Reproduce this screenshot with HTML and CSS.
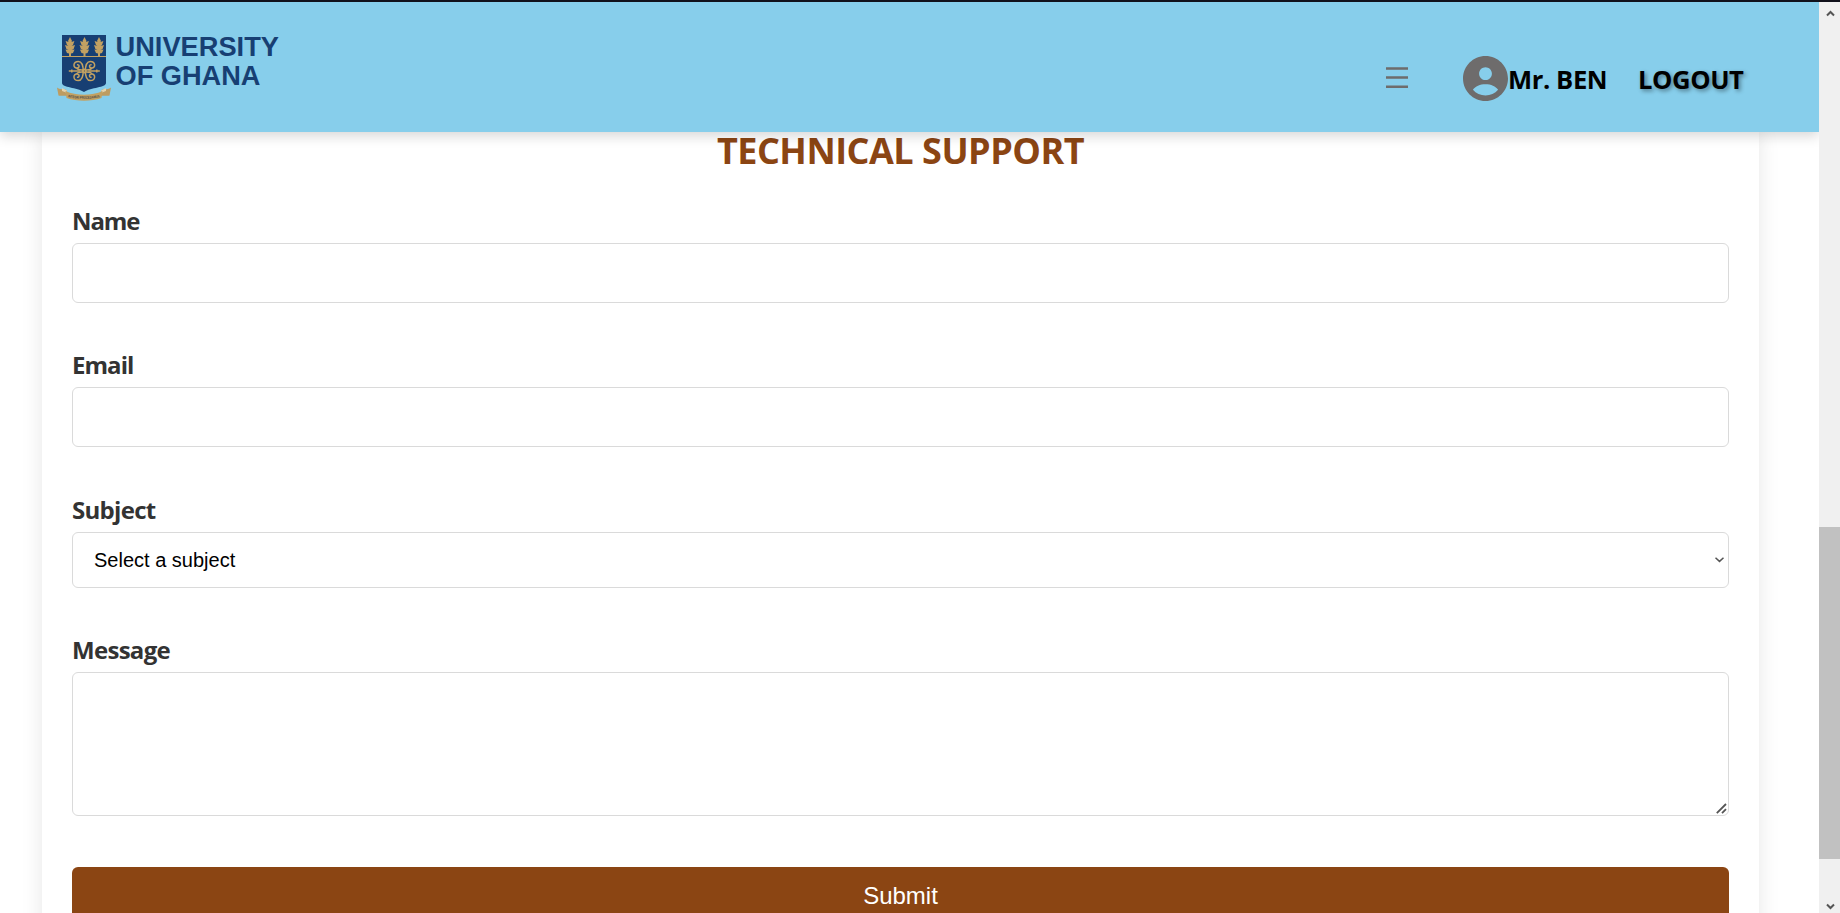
FILE: index.html
```html
<!DOCTYPE html>
<html lang="en">
<head>
<meta charset="utf-8">
<title>Technical Support</title>
<link rel="stylesheet" href="styles.css">
</head>
<body>
<div class="window">
  <div class="page">
    <header class="header">
      <svg class="logo" width="230" height="76" viewBox="0 0 230 76" role="img" aria-label="University of Ghana">
        <defs>
          <g id="tree" fill="#c2a162">
            <path d="M0 0L2 4L1.400 5L4.400 4L3 8L1.600 9L5 8L3.600 12L1.600 13L4.600 12.400L3 16L1 16.600V20H-1V16.600L-3 16L-4.600 12.400L-1.600 13L-3.600 12L-5 8L-1.600 9L-3 8L-4.400 4L-1.400 5L-2 4Z"/>
          </g>
          <path id="curl" d="M1 1C1 -2 1 -9.500 6 -9.500C11.500 -9.500 11.500 -3 7.500 -3C4.500 -3 4.500 -6.800 7.300 -6.300M1 -1C4 -1 6 -.5 8 -3"/>
        </defs>
        <path d="M7 5H51V53C51 58 36 57 29 62C22 57 7 58 7 53Z" fill="#173f73"/>
        <use href="#tree" x="15" y="7"/><use href="#tree" x="29.500" y="7"/><use href="#tree" x="44" y="7"/>
        <path d="M7 26.500H51" stroke="#c2a162" stroke-width="1"/>
        <g transform="translate(29.300 41)" fill="none" stroke="#c2a162" stroke-width="1.500">
          <use href="#curl"/><use href="#curl" transform="scale(-1 1)"/>
          <use href="#curl" transform="scale(1 -1)"/><use href="#curl" transform="scale(-1 -1)"/>
          <path d="M-15.500 0H-4M4 0H15.500"/><path d="M-12.500 -1.500V1.500M12.500 -1.500V1.500"/><circle r="1.700"/>
        </g>
        <path d="M2 57.500C5 60 8 58.500 11.500 60L12 66C8 65 5 66.500 3.500 65.500Z" fill="#bd9c61"/>
        <path d="M56 57.500C53 60 50 58.500 46.500 60L46 66C50 65 53 66.500 54.500 65.500Z" fill="#bd9c61"/>
        <path d="M7 58L12 60.500L11 62.500L7 61Z M51 58L46 60.500L47 62.500L51 61Z" fill="#e3d3ae"/>
        <path d="M10.500 61C21 66 37 66 47.500 61L46.500 68C36 71.500 22 71.500 11.500 68Z" fill="#c2a162"/>
        <path id="motto" d="M13 67C22 69.500 36 69.500 46 67" fill="none"/>
        <text class="motto"><textPath href="#motto" textLength="32" lengthAdjust="spacingAndGlyphs">INTEGRI PROCEDAMUS</textPath></text>
        <text class="wordmark" x="60.500" y="25.600" textLength="163.500" lengthAdjust="spacingAndGlyphs">UNIVERSITY</text>
        <text class="wordmark" x="60.500" y="54.600" textLength="145" lengthAdjust="spacingAndGlyphs">OF GHANA</text>
      </svg>
      <nav class="nav">
        <svg class="menu" width="22" height="22" viewBox="0 0 22 22"><path d="M0 1.500H22M0 10.500H22M0 19.700H22" stroke="#6e6c6c" stroke-width="2.500"/></svg>
        <div class="user">
          <svg width="45" height="45" viewBox="2 2 20 20" fill="#6e6c6c"><path d="M12 2C6.480 2 2 6.480 2 12s4.480 10 10 10 10-4.480 10-10S17.520 2 12 2zm0 5c1.550 0 2.850 1.250 2.850 2.850S13.550 12.700 12 12.700 9.150 11.450 9.150 9.850 10.450 7 12 7zm0 12.500c-2.200 0-4.200-.850-5.600-2.500C7.500 15.300 9.500 14.500 12 14.500s4.500.8 5.600 2.500c-1.400 1.650-3.400 2.500-5.600 2.500z"/></svg>
          <span class="user-name">Mr. BEN</span>
        </div>
        <a class="logout">LOGOUT</a>
      </nav>
    </header>
    <main class="card">
      <h1 class="title">TECHNICAL SUPPORT</h1>
      <form class="form">
        <div class="group">
          <label class="label l-name" for="name">Name</label>
          <input class="field" id="name" type="text">
        </div>
        <div class="group group-email">
          <label class="label l-email" for="email">Email</label>
          <input class="field" id="email" type="email">
        </div>
        <div class="group">
          <label class="label">Subject</label>
          <div class="field select">
            <span class="select-text">Select a subject</span>
            <svg width="9" height="6" viewBox="0 0 9 6" fill="none" stroke="#555" stroke-width="1.500"><path d="M.5 .8L4.500 4.400L8.500 .8"/></svg>
          </div>
        </div>
        <div class="group">
          <label class="label">Message</label>
          <div class="field area">
            <svg width="11" height="11" viewBox="0 0 11 11" stroke="#555" stroke-width="1.800"><path d="M.8 10.200L10 1M6 10.200L10 6.200"/></svg>
          </div>
        </div>
        <button class="submit" type="button">Submit</button>
      </form>
    </main>
  </div>
  <aside class="scrollbar">
    <svg width="9" height="7" viewBox="0 0 9 7" fill="none" stroke="#555" stroke-width="2"><path d="M1 5.500L4.500 2L8 5.500"/></svg>
    <div class="thumb"></div>
    <svg width="9" height="7" viewBox="0 0 9 7" fill="none" stroke="#555" stroke-width="2"><path d="M1 1.500L4.500 5L8 1.500"/></svg>
  </aside>
</div>
</body>
</html>
```
FILE: styles.css
```css
* { box-sizing: border-box; }
body {
  margin: 0;
  height: 913px;
  overflow: hidden;
  background: #fff;
  font-family: "Open Sans", "Noto Sans", sans-serif;
}
.window {
  display: flex;
  height: 913px;
  border-top: 2px solid #11111b;
  overflow: hidden;
}
.page {
  flex: 1;
  display: flex;
  flex-direction: column;
  overflow: hidden;
}
.header {
  position: relative;
  z-index: 2;
  flex: none;
  height: 130px;
  display: flex;
  justify-content: space-between;
  align-items: flex-start;
  padding: 28px 76px 0 55px;
  background: #87ceeb;
  box-shadow: 0 4px 12px rgba(0, 0, 0, 0.16);
}
.logo { display: block; }
.wordmark {
  font: bold 27.5px "Liberation Sans", Arial, sans-serif;
  fill: #173f73;
}
.motto {
  font: bold 3.6px "Liberation Sans", Arial, sans-serif;
  fill: #4b4a4a;
}
.nav {
  display: flex;
  align-items: center;
  height: 45px;
  margin-top: 26px;
  font-size: 25.6px;
  font-weight: 700;
  letter-spacing: -0.4px;
  color: #000;
}
.menu { margin-right: 55px; margin-bottom: 2px; }
.user {
  display: flex;
  align-items: center;
  width: 175px;
  white-space: nowrap;
}
.user-name { line-height: 45px; margin-top: 1px; }
.logout {
  width: 105px;
  line-height: 45px;
  margin-top: 1px;
  text-shadow: 2px 2px 4px rgba(0, 0, 0, 0.4);
}
.card {
  flex: none;
  height: 900px;
  margin: 0 60px 0 42px;
  padding: 0 30px;
  background: #fff;
  box-shadow: 0 0 20px rgba(0, 0, 0, 0.1);
}
.title {
  margin: 0;
  height: 72px;
  line-height: 38px;
  text-align: center;
  font-size: 36px;
  font-weight: 700;
  letter-spacing: -0.5px;
  color: #8b4513;
}
.form { display: flex; flex-direction: column; }
.group {
  display: flex;
  flex-direction: column;
  margin-bottom: 45px;
}
.group-email { margin-bottom: 46px; }
.label {
  align-self: flex-start;
  height: 32px;
  line-height: 34px;
  margin-bottom: 7px;
  font-size: 24px;
  font-weight: 700;
  letter-spacing: -0.7px;
  color: #333;
}
.l-name { letter-spacing: -1.1px; }
.l-email { letter-spacing: -0.95px; }
.field {
  width: 100%;
  height: 60px;
  border: 1px solid #dadada;
  border-radius: 6px;
  background: #fff;
  outline: none;
}
.select {
  display: flex;
  align-items: center;
  justify-content: space-between;
  height: 56px;
  padding: 0 4px 0 21px;
  font: 20px "Liberation Sans", Arial, sans-serif;
  color: #000;
}
.area {
  display: flex;
  justify-content: flex-end;
  align-items: flex-end;
  height: 144px;
  padding: 0 1px 1px 0;
}
.submit {
  height: 57px;
  margin-top: 6px;
  padding: 0;
  border: 0;
  border-radius: 6px;
  background: #8b4513;
  color: #fff;
  font: 24px "Liberation Sans", Arial, sans-serif;
}
.scrollbar {
  flex: none;
  width: 21px;
  display: flex;
  flex-direction: column;
  align-items: center;
  padding-top: 8px;
  background: #f0f0f0;
}
.scrollbar svg { flex: none; margin-left: 2px; }
.thumb {
  flex: none;
  width: 21px;
  height: 332px;
  margin: 510px 0 44px;
  background: #c1c1c1;
}
```
